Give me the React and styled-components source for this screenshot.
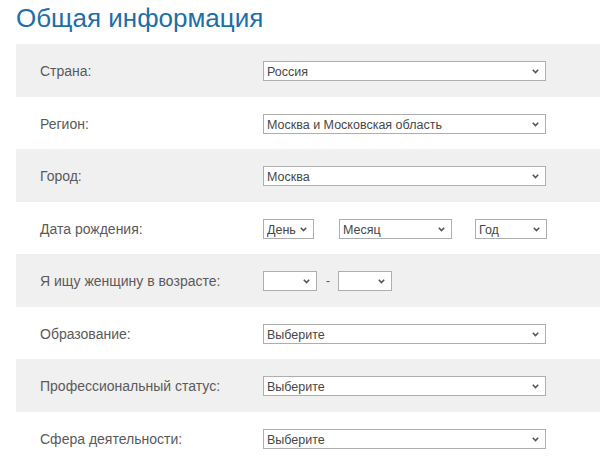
import React from "react";
import styled, { createGlobalStyle } from "styled-components";

const Global = createGlobalStyle`
  html, body { margin: 0; padding: 0; background: #fff; }
  body { font-family: "Liberation Sans", Arial, sans-serif; overflow: hidden; }
`;

const Page = styled.div`
  padding: 0 0 0 16px;
  width: 584px;
`;

const Title = styled.h1`
  margin: 0;
  padding-top: 3px;
  height: 41px;
  font-family: "Liberation Sans", Arial, sans-serif;
  font-weight: normal;
  font-size: 26px;
  line-height: 30px;
  color: #1c6fa8;
`;

const Row = styled.div`
  display: grid;
  grid-template-columns: 223px 1fr;
  align-items: center;
  height: 52.5px;
  padding-left: 24px;
  background: ${(p) => (p.$shaded ? "#f0f0f0" : "#ffffff")};
`;

const Label = styled.div`
  font-size: 14px;
  color: #5a5a5a;
  padding-top: 2px;
`;

const Controls = styled.div`
  display: flex;
  align-items: center;
  padding-top: 2px;
`;

const SelectBox = styled.div`
  position: relative;
  width: ${(p) => p.$w}px;
  margin-left: ${(p) => p.$ml || 0}px;
  height: 20px;
  box-sizing: border-box;
  border: 1px solid #aeaeae;
  background: #fff;
`;

const NativeSelect = styled.select`
  appearance: none;
  -webkit-appearance: none;
  width: 100%;
  height: 100%;
  border: none;
  outline: none;
  background: transparent;
  margin: 0;
  padding: 0 14px 0 3px;
  font-family: "Liberation Sans", Arial, sans-serif;
  font-weight: 400;
  font-size: 12.5px;
  color: #474747;
`;

const Chevron = styled.svg`
  position: absolute;
  right: 6px;
  top: 7px;
  width: 7px;
  height: 5px;
  pointer-events: none;
`;

const Dash = styled.span`
  font-size: 12px;
  color: #555;
  padding: 0 8px 0 9px;
`;

function Select({ w, ml, value }) {
  return (
    <SelectBox $w={w} $ml={ml}>
      <NativeSelect defaultValue={value || ""}>
        <option value={value || ""}>{value || ""}</option>
      </NativeSelect>
      <Chevron viewBox="0 0 7 5">
        <path d="M0.8 0.8 L3.5 3.6 L6.2 0.8" fill="none" stroke="#555" strokeWidth="1.6" />
      </Chevron>
    </SelectBox>
  );
}

export default function App() {
  return (
    <>
      <Global />
      <Page>
        <Title>Общая информация</Title>
        <Row $shaded>
          <Label>Страна:</Label>
          <Controls><Select w={283} value="Россия" /></Controls>
        </Row>
        <Row>
          <Label>Регион:</Label>
          <Controls><Select w={283} value="Москва и Московская область" /></Controls>
        </Row>
        <Row $shaded>
          <Label>Город:</Label>
          <Controls><Select w={283} value="Москва" /></Controls>
        </Row>
        <Row>
          <Label>Дата рождения:</Label>
          <Controls>
            <Select w={51} value="День" />
            <Select w={113} ml={25} value="Месяц" />
            <Select w={72} ml={23} value="Год" />
          </Controls>
        </Row>
        <Row $shaded>
          <Label>Я ищу женщину в возрасте:</Label>
          <Controls>
            <Select w={54} />
            <Dash>-</Dash>
            <Select w={54} />
          </Controls>
        </Row>
        <Row>
          <Label>Образование:</Label>
          <Controls><Select w={283} value="Выберите" /></Controls>
        </Row>
        <Row $shaded>
          <Label>Профессиональный статус:</Label>
          <Controls><Select w={283} value="Выберите" /></Controls>
        </Row>
        <Row>
          <Label>Сфера деятельности:</Label>
          <Controls><Select w={283} value="Выберите" /></Controls>
        </Row>
      </Page>
    </>
  );
}
